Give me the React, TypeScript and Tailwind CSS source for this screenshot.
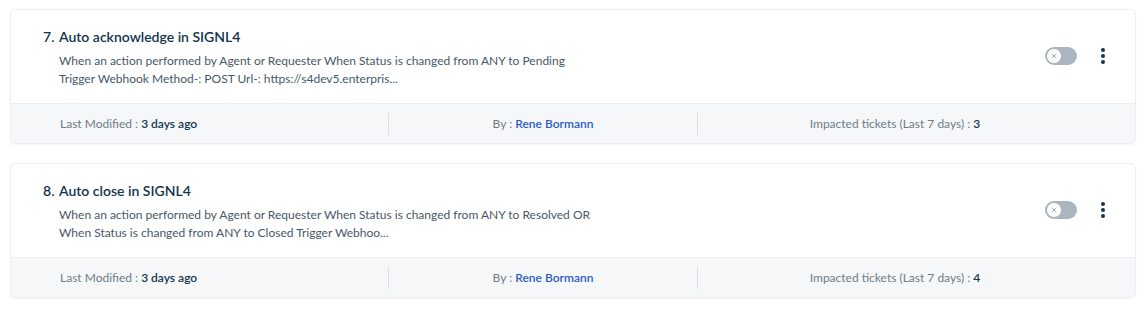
import { X } from "lucide-react";

type Rule = {
  index: number;
  title: string;
  lines: string[];
  modified: string;
  by: string;
  tickets: number;
};

const RULES: Rule[] = [
  {
    index: 7,
    title: "Auto acknowledge in SIGNL4",
    lines: [
      "When an action performed by Agent or Requester When Status is changed from ANY to Pending",
      "Trigger Webhook Method-: POST Url-: https://s4dev5.enterpris...",
    ],
    modified: "3 days ago",
    by: "Rene Bormann",
    tickets: 3,
  },
  {
    index: 8,
    title: "Auto close in SIGNL4",
    lines: [
      "When an action performed by Agent or Requester When Status is changed from ANY to Resolved OR",
      "When Status is changed from ANY to Closed Trigger Webhoo...",
    ],
    modified: "3 days ago",
    by: "Rene Bormann",
    tickets: 4,
  },
];

function Toggle() {
  return (
    <div className="flex h-[18px] w-[32px] items-center rounded-full bg-[#aab5c0] px-[2px]">
      <div className="flex h-[14px] w-[14px] items-center justify-center rounded-full bg-white">
        <X size={8} strokeWidth={2.5} className="text-[#8a9aa8]" />
      </div>
    </div>
  );
}

function Kebab() {
  return (
    <div className="flex flex-col items-center gap-[2px]">
      <span className="h-[4px] w-[4px] rounded-full bg-[#12344d]" />
      <span className="h-[4px] w-[4px] rounded-full bg-[#12344d]" />
      <span className="h-[4px] w-[4px] rounded-full bg-[#12344d]" />
    </div>
  );
}

function RuleCard({ rule }: { rule: Rule }) {
  return (
    <div className="overflow-hidden rounded-[5px] border border-[#ebeff3] bg-white shadow-[0_1px_2px_rgba(18,52,77,0.06)]">
      <div className="flex h-[93px] items-start">
        <div className="flex-1 pl-[32px] pt-[17px]">
          <h3 className="flex text-[14px] font-semibold leading-[20px] text-[#12344d]">
            <span className="w-[16px]">{rule.index}.</span>
            <span>{rule.title}</span>
          </h3>
          <div className="mt-[5px] pl-[16px] text-[12px] leading-[18px] text-[#475867]">
            {rule.lines.map((line) => (
              <p key={line}>{line}</p>
            ))}
          </div>
        </div>
        <div className="flex items-center gap-[24px] pr-[30px] pt-[37px]">
          <Toggle />
          <Kebab />
        </div>
      </div>
      <div className="flex h-[40px] items-center border-t border-[#ebeff3] bg-[#f5f7f9] text-[12px]">
        <div className="w-[377px] pl-[49px] text-[#6f7c87]">
          Last Modified : <span className="font-semibold text-[#12344d]">{rule.modified}</span>
        </div>
        <div className="h-[22px] w-px bg-[#dadfe4]" />
        <div className="w-[308px] text-center text-[#6f7c87]">
          By : <span className="font-semibold text-[#2c5cc5]">{rule.by}</span>
        </div>
        <div className="h-[22px] w-px bg-[#dadfe4]" />
        <div className="w-[394px] text-center text-[#6f7c87]">
          Impacted tickets (Last 7 days) : <span className="font-semibold text-[#12344d]">{rule.tickets}</span>
        </div>
      </div>
    </div>
  );
}

export default function App() {
  return (
    <main
      className="h-[309px] w-[1146px] bg-white pl-[10px] pr-[10px] pt-[9px]"
      style={{ fontFamily: "Lato, 'Noto Sans', sans-serif" }}
    >
      <div className="flex flex-col gap-[19px]">
        {RULES.map((rule) => (
          <RuleCard key={rule.index} rule={rule} />
        ))}
      </div>
    </main>
  );
}
